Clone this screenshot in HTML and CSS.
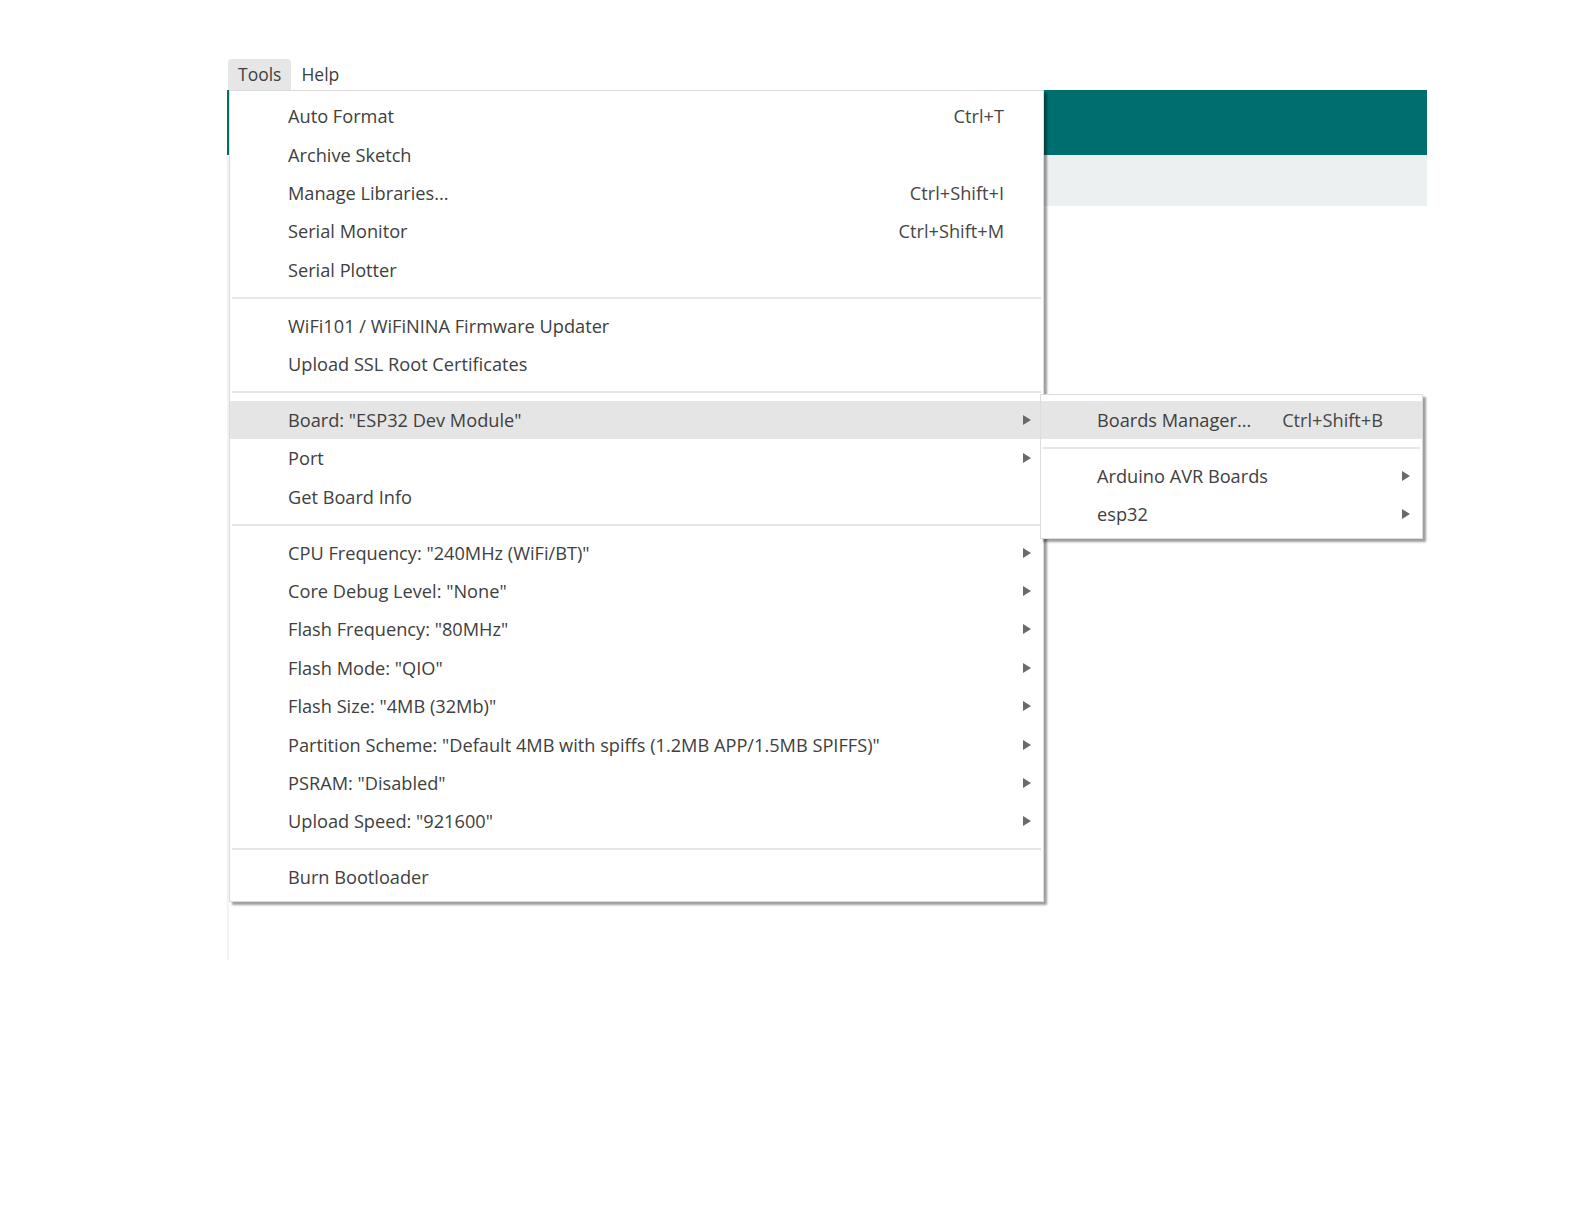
FILE: index.html
```html
<!DOCTYPE html>
<html>
<head>
<meta charset="utf-8">
<link rel="stylesheet" href="styles.css">
</head>
<body>
<div class="screen">
  <div class="menubar">
    <div class="mb-item active">Tools</div>
    <div class="mb-item">Help</div>
  </div>
  <div class="app">
    <div class="app-header"></div>
    <div class="app-toolbar"></div>
    <div class="app-body"></div>

    <div class="menu main-menu">
      <div class="row"><span class="label">Auto Format</span><span class="key">Ctrl+T</span><span class="arr"></span></div>
      <div class="row"><span class="label">Archive Sketch</span><span class="key"></span><span class="arr"></span></div>
      <div class="row"><span class="label">Manage Libraries...</span><span class="key">Ctrl+Shift+I</span><span class="arr"></span></div>
      <div class="row"><span class="label">Serial Monitor</span><span class="key">Ctrl+Shift+M</span><span class="arr"></span></div>
      <div class="row"><span class="label">Serial Plotter</span><span class="key"></span><span class="arr"></span></div>
      <div class="sep"></div>
      <div class="row"><span class="label">WiFi101 / WiFiNINA Firmware Updater</span><span class="key"></span><span class="arr"></span></div>
      <div class="row"><span class="label">Upload SSL Root Certificates</span><span class="key"></span><span class="arr"></span></div>
      <div class="sep"></div>
      <div class="row hl"><span class="label">Board: "ESP32 Dev Module"</span><span class="key"></span><span class="arr"><i class="tri"></i></span></div>
      <div class="row"><span class="label">Port</span><span class="key"></span><span class="arr"><i class="tri"></i></span></div>
      <div class="row"><span class="label">Get Board Info</span><span class="key"></span><span class="arr"></span></div>
      <div class="sep"></div>
      <div class="row"><span class="label">CPU Frequency: "240MHz (WiFi/BT)"</span><span class="key"></span><span class="arr"><i class="tri"></i></span></div>
      <div class="row"><span class="label">Core Debug Level: "None"</span><span class="key"></span><span class="arr"><i class="tri"></i></span></div>
      <div class="row"><span class="label">Flash Frequency: "80MHz"</span><span class="key"></span><span class="arr"><i class="tri"></i></span></div>
      <div class="row"><span class="label">Flash Mode: "QIO"</span><span class="key"></span><span class="arr"><i class="tri"></i></span></div>
      <div class="row"><span class="label">Flash Size: "4MB (32Mb)"</span><span class="key"></span><span class="arr"><i class="tri"></i></span></div>
      <div class="row"><span class="label">Partition Scheme: "Default 4MB with spiffs (1.2MB APP/1.5MB SPIFFS)"</span><span class="key"></span><span class="arr"><i class="tri"></i></span></div>
      <div class="row"><span class="label">PSRAM: "Disabled"</span><span class="key"></span><span class="arr"><i class="tri"></i></span></div>
      <div class="row"><span class="label">Upload Speed: "921600"</span><span class="key"></span><span class="arr"><i class="tri"></i></span></div>
      <div class="sep"></div>
      <div class="row"><span class="label">Burn Bootloader</span><span class="key"></span><span class="arr"></span></div>
    </div>

    <div class="menu sub-menu">
      <div class="row hl"><span class="label">Boards Manager...</span><span class="key">Ctrl+Shift+B</span><span class="arr"></span></div>
      <div class="sep"></div>
      <div class="row"><span class="label">Arduino AVR Boards</span><span class="key"></span><span class="arr"><i class="tri"></i></span></div>
      <div class="row"><span class="label">esp32</span><span class="key"></span><span class="arr"><i class="tri"></i></span></div>
    </div>
  </div>
</div>
</body>
</html>
```
FILE: styles.css
```css
html, body {
  margin: 0;
  padding: 0;
  background: #ffffff;
}
body {
  font-family: "Open Sans", "Noto Sans", sans-serif;
  color: #404040;
}
.screen {
  padding-top: 59px;
  padding-left: 227px;
  width: 1200px;
}
.menubar {
  display: flex;
  height: 31px;
  align-items: stretch;
  padding-left: 1px;
}
.mb-item {
  font-size: 17.5px;
  line-height: 31px;
  padding: 0 10px;
  color: #404040;
}
.mb-item.active {
  background: #e6e6e6;
  border-radius: 4px 4px 0 0;
}
.app {
  position: relative;
  border-left: 2px solid #f2f2f2;
}
.app-header {
  height: 65px;
  background: #006e6e;
  margin-left: -2px;
  border-left: 2px solid #0a6b66;
}
.app-toolbar {
  height: 51px;
  background: #ecf0f1;
}
.app-body {
  height: 754px;
}
.menu {
  position: absolute;
  background: #ffffff;
  border: 1px solid #dcdcdc;
  box-shadow: 3px 3px 2px rgba(0, 0, 0, 0.38);
  box-sizing: border-box;
}
.main-menu {
  left: 0px;
  top: 0px;
  width: 815px;
  padding-top: 6px;
  padding-bottom: 5px;
}
.sub-menu {
  left: 811px;
  top: 304px;
  width: 383px;
  padding-top: 6px;
  padding-bottom: 4px;
}
.row {
  display: flex;
  align-items: center;
  height: 38.4px;
  padding-left: 58px;
  font-size: 18.2px;
  white-space: nowrap;
}
.sub-menu .row {
  padding-left: 56px;
}
.row.hl {
  background: #e5e5e5;
}
.label {
  flex: 1;
}
.key {
  color: #464646;
  margin-right: 5px;
}
.arr {
  width: 34px;
  display: flex;
  justify-content: center;
  align-items: center;
  flex-shrink: 0;
}
.tri {
  display: block;
  width: 0;
  height: 0;
  border-top: 5px solid transparent;
  border-bottom: 5px solid transparent;
  border-left: 8px solid #6a6a6a;
  margin-left: 1px;
}
.sep {
  height: 17.5px;
  display: flex;
  align-items: center;
  padding: 0 2px;
}
.sep::before {
  content: "";
  display: block;
  flex: 1;
  height: 2px;
  background: #e6e6e6;
}
```
